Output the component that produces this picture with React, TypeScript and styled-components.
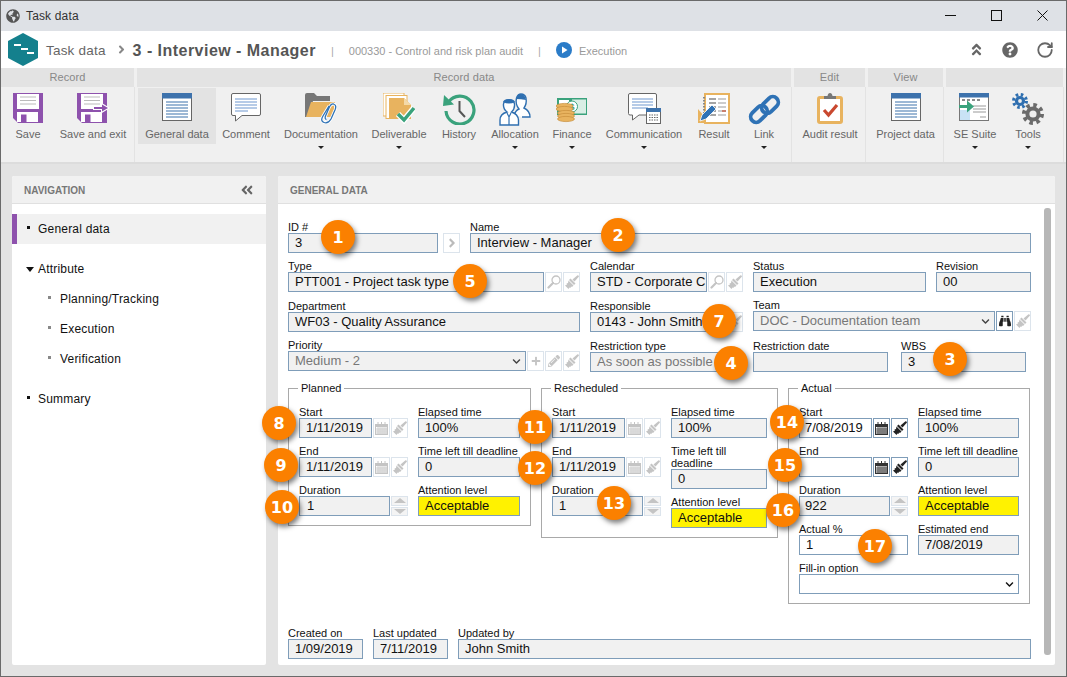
import React from "react";
import styled, { createGlobalStyle } from "styled-components";
import { FaBinoculars, FaPlus, FaPencilAlt, FaQuestionCircle, FaGlobeAmericas, FaAngleDoubleUp, FaAngleDoubleLeft, FaAngleRight, FaChevronDown } from "react-icons/fa";
import { RotateCw } from "lucide-react";

const Global = createGlobalStyle`
  html, body { margin: 0; padding: 0; background: #e3e3e3; overflow: hidden; }
  body { font-family: "Liberation Sans", Arial, sans-serif; }
  * { box-sizing: border-box; }
`;

const Win = styled.div`
  position: relative; width: 1067px; height: 677px; border: 1px solid #6a6a6a;
  display: flex; flex-direction: column; background: #e3e3e3; overflow: hidden;
`;
const TitleBar = styled.div`
  height: 30px; flex: none; background: #dee1e6; display: flex; align-items: center; padding: 0 18px 1px 5px; color: #333; font-size: 12px;
`;
const TitleGlobe = styled.span`display: flex; margin-right: 6px; color: #555;`;
const TitleText = styled.span`flex: 1; letter-spacing: .15px;`;
const WinBtns = styled.div`display: flex; gap: 35px; align-items: center; color: #111;`;

const Header = styled.div`height: 37px; flex: none; background: #fff; display: flex; align-items: center; padding: 0 12px 0 7px;`;
const Crumb = styled.span`font-size: 13.5px; color: #666; margin: 2px 0 0 8px; letter-spacing: .2px;`;
const CrumbArrow = styled.span`display: flex; color: #888; margin: 0 5px 0 9px;`;
const Heading = styled.span`font-size: 16px; font-weight: bold; color: #555; letter-spacing: .47px; margin-top: 2px;`;
const Pipe = styled.span`color: #aaa; font-size: 11px; margin: 2px 15px 0 15px;`;
const Muted = styled.span`color: #9a9a9a; font-size: 11px; margin-top: 2px;`;
const HeaderRight = styled.div`margin-left: auto; display: flex; align-items: center; gap: 18px; color: #666;`;
const PlayDot = styled.svg`margin-right: 7px; flex: none;`;

const Ribbon = styled.div`height: 96px; flex: none; background: #f0f0f0; display: flex; border-bottom: 2px solid #dcdcdc;`;
const Section = styled.div<{ $w: number }>`width: ${p => p.$w}px; flex: none; display: flex; flex-direction: column;`;
const SectionHead = styled.div`
  height: 19px; flex: none; background: #e3e3e3; margin-right: 3px; text-align: center; color: #888; font-size: 11px; line-height: 18px; letter-spacing: .1px;
`;
const SectionBody = styled.div<{ $pad?: number }>`
  flex: 1; display: flex; border-right: 1px solid #e3e3e3; margin-right: 2px; padding: 1px 0 0 ${p => p.$pad ?? 0}px;
`;
const ItemWrap = styled.div<{ $w: number }>`width: ${p => p.$w}px; flex: none; display: flex; flex-direction: column; align-items: center;`;
const Item = styled.div<{ $active?: boolean }>`
  width: 100%; height: 56px; flex: none; display: flex; flex-direction: column; align-items: center; padding-top: 5px;
  background: ${p => (p.$active ? "#e3e3e3" : "transparent")};
`;
const IconBox = styled.div`height: 32px; flex: none; display: flex; align-items: flex-start; justify-content: center;`;
const ItemLabel = styled.div`margin-top: 3px; font-size: 11px; line-height: 13px; color: #666; white-space: nowrap;`;
const Caret = styled.div`
  margin-top: 2px; width: 0; height: 0; border-left: 3px solid transparent; border-right: 3px solid transparent; border-top: 3px solid #222;
`;

const Content = styled.div`flex: 1; display: flex; gap: 12px; padding: 12px 11px 11px 11px; min-height: 0;`;
const Panel = styled.div<{ $w?: number }>`
  background: #fff; display: flex; flex-direction: column; border-radius: 2px;
  ${p => (p.$w ? `width:${p.$w}px; flex:none;` : "flex:1; min-width:0;")}
`;
const PanelHead = styled.div`
  height: 28px; flex: none; background: #f1f1f1; border-bottom: 1px solid #e0e0e0; display: flex; align-items: center; justify-content: space-between;
  padding: 1px 12px 0; font-size: 10px; font-weight: bold; color: #777; border-radius: 2px 2px 0 0;
`;
const NavList = styled.div`padding-top: 10px; display: flex; flex-direction: column;`;
const NavRow = styled.div<{ $active?: boolean; $sub?: boolean; $gap?: boolean }>`
  height: 30px; flex: none; display: flex; align-items: center; font-size: 12px; color: #111; letter-spacing: .2px;
  padding-left: ${p => (p.$sub ? 36 : 15)}px;
  margin-top: ${p => (p.$gap ? 10 : 0)}px;
  background: ${p => (p.$active ? "#f1f1f1" : "transparent")};
  box-shadow: ${p => (p.$active ? "inset 5px 0 0 #8e52ad" : "none")};
`;
const Bullet = styled.span<{ $sub?: boolean }>`
  width: 3px; height: 3px; flex: none; background: ${p => (p.$sub ? "#888" : "#111")}; margin-right: ${p => (p.$sub ? 9 : 8)}px; margin-top: -3px;
`;
const Tri = styled.span`
  width: 0; height: 0; flex: none; border-left: 4px solid transparent; border-right: 4px solid transparent; border-top: 5px solid #111;
  margin: 0 4px 0 -1px;
`;

const Form = styled.div`flex: 1; display: flex; flex-direction: column; padding: 17px 24px 6px 10px; position: relative; min-height: 0;`;
const Row = styled.div<{ $mt?: number; $gap?: number }>`display: flex; align-items: flex-start; margin-top: ${p => p.$mt ?? 0}px; gap: ${p => p.$gap ?? 10}px;`;
const Field = styled.div<{ $w?: number; $shift?: number; $ml?: number; $grow?: boolean }>`
  display: flex; flex-direction: column; flex: ${p => (p.$grow ? "1" : "none")}; min-width: 0;
  ${p => (p.$w ? `width:${p.$w}px;` : "")} margin-top: ${p => p.$shift ?? 0}px; margin-left: ${p => p.$ml ?? 0}px;
`;
const Label = styled.label`font-size: 11px; line-height: 12px; color: #111; min-height: 12px; display: block;`;
const Value = styled.div<{ $on?: boolean; $dim?: boolean; $warn?: boolean; $pl?: number }>`
  height: 20px; flex: none; min-width: 0; border: 1px solid #7f9db9; font-size: 13px; line-height: 18px; white-space: nowrap; overflow: hidden;
  padding-left: ${p => p.$pl ?? 6}px; color: ${p => (p.$dim ? "#777" : "#111")};
  background: ${p => (p.$warn ? "#fff200" : p.$on ? "#fff" : "#f1f1f1")};
  display: flex; align-items: center; justify-content: space-between;
`;
const Line = styled.div`display: flex; gap: 1px; ${Value} { flex: 1; }`;
const Chev = styled.span<{ $dim?: boolean }>`display: flex; margin-right: 4px; color: ${p => (p.$dim ? "#444" : "#111")};`;
const SmallBtn = styled.div<{ $on?: boolean }>`
  width: 17px; height: 20px; flex: none; display: flex; align-items: center; justify-content: center; background: #fff;
  border: 1px solid ${p => (p.$on ? "#7f9db9" : "#dce4ec")}; color: ${p => (p.$on ? "#222" : "#c4c4c4")};
`;
const ArrowBtn = styled(SmallBtn)`margin: 12px 0 0 -5px; color: #bbb;`;
const Spin = styled.div`width: 17px; height: 20px; flex: none; display: flex; flex-direction: column; gap: 1px;`;
const SpinPart = styled.div<{ $up?: boolean }>`
  flex: 1; border: 1px solid #dce4ec; background: #f4f4f4; display: flex; align-items: center; justify-content: center;
  &::after { content: ""; width: 0; height: 0; border-left: 6px solid transparent; border-right: 6px solid transparent;
    ${p => (p.$up ? "border-bottom: 5px solid #c4c4c4;" : "border-top: 5px solid #c4c4c4;")} }
`;

const Group = styled.div<{ $w: number; $h: number }>`
  position: relative; flex: none; width: ${p => p.$w}px; height: ${p => p.$h}px; border: 1px solid #a9a9a9; padding: 17px 10px 0 10px;
  display: flex; flex-direction: column; gap: 7px;
`;
const Legend = styled.span`
  position: absolute; top: -7px; left: 9px; background: #fff; padding: 0 3px; font-size: 11px; line-height: 13px; color: #111;
`;
const Columns = styled.div`display: flex; gap: 10px; align-items: flex-start;`;
const Col = styled.div<{ $w: number }>`width: ${p => p.$w}px; flex: none; display: flex; flex-direction: column; gap: 7px;`;

const Footer = styled.div`margin-top: auto; display: flex; gap: 10px;`;

const Scroll = styled.div`
  position: absolute; right: 4px; top: 4px; bottom: 10px; width: 7px; background: #b7b7b7; border-radius: 3px;
`;

const BadgeDot = styled.div<{ $x: number; $y: number }>`
  position: absolute; left: ${p => p.$x - 17}px; top: ${p => p.$y - 17}px; width: 34px; height: 34px; border-radius: 50%;
  background: #fb8000; color: #fff; font-family: "DejaVu Sans", Verdana, sans-serif; font-weight: bold; font-size: 16px;
  display: flex; align-items: center; justify-content: center; box-shadow: 2px 3px 5px rgba(0,0,0,.5);
`;

/* ---------- drawn icons ---------- */
const BLUE = "#3d72ac";
const TAN = "#e8b35f";
const GREEN = "#3aa27c";
const PURPLE = "#8e52ad";

const Disk = () => (
  <>
    <path d="M0 0H30V30H5L0 25Z" fill={PURPLE} />
    <rect x="4" y="1" width="22" height="15" fill="#fff" />
    <path d="M7 4H23M7 7.5H23M7 11H23" stroke="#bbb" strokeWidth="1" />
    <rect x="4" y="19" width="21" height="10" fill="#fff" />
    <rect x="8" y="21.5" width="5.5" height="7.5" fill={PURPLE} />
  </>
);
const SaveIcon = () => <svg width="30" height="30" viewBox="0 0 30 30"><Disk /></svg>;
const SaveExitIcon = () => (
  <svg width="33" height="30" viewBox="0 0 33 30">
    <Disk />
    <path d="M16 13H24V9.5L33 15L24 20.5V17H16Z" fill="#fff" />
    <path d="M17 14H25V11.5L31 15L25 18.5V16H17Z" fill={PURPLE} />
  </svg>
);
const ListIcon = () => (
  <svg width="30" height="28" viewBox="0 0 30 28">
    <rect x=".5" y=".5" width="29" height="27" fill="#fff" stroke="#666" />
    <rect x="0" y="0" width="30" height="5.5" fill={BLUE} />
    <path d="M4 9H26M4 12H26M4 15H26M4 18H26M4 21H26M4 24H26" stroke={BLUE} strokeWidth="1.2" />
  </svg>
);
const CommentIcon = () => (
  <svg width="30" height="29" viewBox="0 0 30 29">
    <path d="M2 .5H28Q29.5 .5 29.5 2V21Q29.5 22.5 28 22.5H11L4.5 28V22.5H2Q.5 22.5 .5 21V2Q.5 .5 2 .5Z" fill="#fff" stroke="#666" />
    <path d="M4 6H26M4 9H26M4 12H26M4 15H26M4 18H17" stroke="#6f97cf" strokeWidth="1.1" />
  </svg>
);
const FolderIcon = () => (
  <svg width="32" height="31" viewBox="0 0 32 31">
    <path d="M0 2Q0 0 2 0H9L12 3H25V8H8L3 24H0Z" fill="#777" />
    <path d="M6 9H30L28 24H1Z" fill={TAN} />
    <path d="M24 13L18 23Q15 28 19 29.5Q23 31 26 26L30 17Q32 12 28.5 11Q26 10.5 24 15L20.5 23Q19.5 26 21.5 26.5" fill="none" stroke="#fff" strokeWidth="3" />
    <path d="M24 13L18 23Q15 28 19 29.5Q23 31 26 26L30 17Q32 12 28.5 11Q26 10.5 24 15L20.5 23Q19.5 26 21.5 26.5" fill="none" stroke="#2f72b5" strokeWidth="1.3" />
  </svg>
);
const DeliverableIcon = () => (
  <svg width="32" height="31" viewBox="0 0 32 31">
    <rect x="0" y="0" width="21" height="23" fill="#fff" stroke={TAN} strokeWidth="1" />
    <rect x="3" y="2.5" width="21" height="23" fill="#fff" stroke={TAN} strokeWidth="1" />
    <path d="M6 5H21L28 12V26H6Z" fill={TAN} />
    <path d="M21 5V12H28Z" fill="#f4d9a8" />
    <path d="M15 21L21 27L31 15" fill="none" stroke="#fff" strokeWidth="6" />
    <path d="M15 21L21 27L31 15" fill="none" stroke={GREEN} strokeWidth="3.5" />
  </svg>
);
const HistoryIcon = () => (
  <svg width="33" height="32" viewBox="0 0 33 32">
    <path d="M5.5 9A14 14 0 1 1 3 18" fill="none" stroke={GREEN} strokeWidth="3.2" />
    <path d="M1 2L11 11.5L0 13Z" fill={GREEN} />
    <path d="M16.5 8V18L22 24" fill="none" stroke="#555" strokeWidth="2" />
  </svg>
);
const AllocIcon = () => (
  <svg width="33" height="33" viewBox="0 0 33 33">
    <g fill="#fff" stroke="#2f6fb0" strokeWidth="1.4">
      <path d="M15 22Q17 17 20 16Q16 11 17.5 5Q19 1 22 1Q26 1 27 5Q28 11 25 15Q31 18 31 24H23" />
      <path d="M1 32V27Q1 21 8 19Q4 16 4.5 11Q5 7 10 7Q15 7 15.5 11Q16 16 12.5 19Q19 21 19.5 27V32Z" />
    </g>
    <path d="M4 9Q10 12 16 9Q15 6 10 6Q5 6 4 9ZM17 6Q22 6 27 7Q26 1 22 1Q18 1 17 6Z" fill="#2f6fb0" />
    <path d="M8 20L10 24L12 20M10 24V32" fill="none" stroke="#2f6fb0" strokeWidth="1.2" />
  </svg>
);
const FinanceIcon = () => (
  <svg width="32" height="30" viewBox="0 0 32 30">
    <rect x="1" y="5" width="30" height="17" fill={GREEN} />
    <rect x="16" y="6.5" width="14" height="14" fill="#d9eee5" />
    <rect x="3" y="7" width="10" height="4" fill="#fff" />
    <circle cx="16" cy="13.5" r="5.5" fill="#fff" stroke={GREEN} />
    <text x="16" y="17" fontSize="9" fontFamily="Liberation Sans" fontWeight="bold" fill={GREEN} textAnchor="middle">$</text>
    {[13, 16, 20, 23, 26].map((y, i) => (
      <ellipse key={i} cx={i < 2 ? 8.5 : 10} cy={y} rx="8.5" ry="2.6" fill={TAN} stroke="#c98f3c" strokeWidth=".7" />
    ))}
  </svg>
);
const CommIcon = () => (
  <svg width="33" height="31" viewBox="0 0 33 31">
    <path d="M2 .5H27Q28.5 .5 28.5 2V22H11L4.5 27V22H2Q.5 22 .5 20.5V2Q.5 .5 2 .5Z" fill="#fff" stroke="#666" />
    <path d="M4 6H25M4 9H25M4 12H25M4 15H20" stroke="#6f97cf" strokeWidth="1.1" />
    <rect x="18.5" y="15.5" width="14" height="15" fill="#fff" stroke="#666" />
    <rect x="18" y="15" width="15" height="4" fill={BLUE} />
    <path d="M21 22H30M21 24.5H30M21 27H30" stroke="#666" strokeWidth="1.2" strokeDasharray="1.5 1" />
  </svg>
);
const ResultIcon = () => (
  <svg width="32" height="32" viewBox="0 0 32 32">
    <path d="M0 16L12 30H0Z" fill={TAN} />
    <rect x="6" y="0" width="26" height="31" fill={TAN} />
    <rect x="8" y="2" width="22" height="27" fill="#fff" />
    <path d="M6 4V26" stroke="#888" strokeWidth="2" strokeDasharray="1.5 1.5" />
    <path d="M11 6H18M11 10H18M11 14H18M11 18H18M11 22H18" stroke="#888" strokeWidth="1.6" />
    <path d="M20 6H28M20 10H28M20 14H28M20 18H28M20 22H28" stroke="#999" strokeWidth="1.2" />
    <path d="M24 18H28" stroke="#c9553c" strokeWidth="1.3" />
    <path d="M2 28L4 22L14 12L18 16L8 26Z" fill="#2f72b5" stroke="#fff" strokeWidth=".8" />
  </svg>
);
const LinkIcon = () => (
  <svg width="33" height="33" viewBox="0 0 33 33">
    <g fill="none" stroke="#2f72b5" strokeWidth="3.8">
      <rect x="1.5" y="15.5" width="19" height="11" rx="5.5" transform="rotate(-45 11 21)" />
      <rect x="12.5" y="6.5" width="19" height="11" rx="5.5" transform="rotate(-45 22 12)" />
    </g>
  </svg>
);
const AuditIcon = () => (
  <svg width="26" height="31" viewBox="0 0 26 31">
    <rect x="1.5" y="4.5" width="23" height="25" rx="1.5" fill="#fff" stroke={TAN} strokeWidth="3" />
    <path d="M7 6V3H10.5Q11 0 13 0Q15 0 15.5 3H19V6Z" fill="#777" />
    <path d="M7 17L11.5 22L20 12" fill="none" stroke="#c9482f" strokeWidth="3.2" />
  </svg>
);
const SuiteIcon = () => (
  <svg width="32" height="28" viewBox="0 0 32 28">
    <rect x=".5" y=".5" width="29" height="27" fill="#fff" stroke="#777" />
    <rect x="0" y="0" width="30" height="4.5" fill={BLUE} />
    <path d="M3 7H6M8 7H11M13 7H16M18 7H21" stroke="#666" strokeWidth="1.4" />
    <rect x="1" y="17" width="10" height="10" fill="#c9e2f5" />
    <path d="M14 13H27M14 16H27M14 19H27M21 24H27" stroke="#999" strokeWidth="1.2" />
    <path d="M-1 12H8V7.5L15 13.5L8 19.5V15H-1Z" fill={GREEN} />
  </svg>
);
const Gear = ({ cx, cy, r, w, color, t }: { cx: number; cy: number; r: number; w: number; color: string; t: number }) => {
  const tr = r + w / 2 + 1;
  const c = 2 * Math.PI * tr;
  return (
    <g fill="none" stroke={color}>
      <circle cx={cx} cy={cy} r={tr} strokeWidth={w} strokeDasharray={`${c / t / 2} ${c / t / 2}`} />
      <circle cx={cx} cy={cy} r={r - w * 0.1} strokeWidth={w} />
    </g>
  );
};
const ToolsIcon = () => (
  <svg width="33" height="33" viewBox="0 0 33 33">
    <Gear cx={8} cy={8} r={3.8} w={3.2} color="#2f6fb0" t={8} />
    <Gear cx={21} cy={21} r={6} w={4} color="#6b6b6b" t={8} />
  </svg>
);
const Logo = () => (
  <svg width="30" height="33" viewBox="0 0 30 33">
    <path d="M15 0L30 8V25L15 33L0 25V8Z" fill="#14808d" />
    <path d="M6 11H13V13H6ZM13 15H20V17H13ZM19 19H26V21H19Z" fill="#fff" />
  </svg>
);
const CalIcon = ({ on }: { on?: boolean }) => {
  const c = on ? "#333" : "#c4c4c4";
  return (
    <svg width="13" height="13" viewBox="0 0 13 13">
      <rect x=".5" y="2.5" width="12" height="10" fill="none" stroke={c} />
      <rect x="0" y="2" width="13" height="3" fill={c} />
      <path d="M3 0V3M6.5 0V3M10 0V3" stroke={c} />
      <path d="M1 7H12M1 9H12M1 11H12M3 5V12M5 5V12M7 5V12M9 5V12M11 5V12" stroke={c} strokeWidth=".8" />
    </svg>
  );
};
const BrushIcon = () => (
  <svg width="14" height="14" viewBox="0 0 14 14" fill="currentColor">
    <path d="M13.5 .5L14 1.500L9.500 6.500L7.500 4.500L12.500 .2Z" />
    <path d="M5.500 3.500L10.500 8.500L9 10L4 5Z" />
    <path d="M3.500 5.500L8.500 10.500L7 12L6 11.500L5.500 13L4.500 12.500L3.500 14L0 10.500L2 9.500L1.500 8.500L3 8Z" />
  </svg>
);
const LensIcon = () => (
  <svg width="14" height="14" viewBox="0 0 14 14" fill="none" stroke="currentColor">
    <circle cx="9" cy="5" r="4" strokeWidth="1.3" />
    <path d="M6 8L1.500 12.500" strokeWidth="2.2" strokeLinecap="round" />
  </svg>
);
const WinMin = () => (
  <svg width="11" height="11" viewBox="0 0 11 11"><path d="M0 5.5H11" stroke="#111" /></svg>
);
const WinMax = () => (
  <svg width="11" height="11" viewBox="0 0 11 11"><rect x=".5" y=".5" width="10" height="10" fill="none" stroke="#111" /></svg>
);
const WinClose = () => (
  <svg width="11" height="11" viewBox="0 0 11 11"><path d="M.5 .5L10.5 10.5M10.5 .5L.5 10.5" stroke="#111" /></svg>
);

/* ---------- composites ---------- */
type Tool = { label: string; w: number; icon: React.ReactNode; caret?: boolean; active?: boolean };
const Tools = ({ items }: { items: Tool[] }) => (
  <>
    {items.map(t => (
      <ItemWrap key={t.label} $w={t.w}>
        <Item $active={t.active}>
          <IconBox>{t.icon}</IconBox>
          <ItemLabel>{t.label}</ItemLabel>
        </Item>
        {t.caret && <Caret />}
      </ItemWrap>
    ))}
  </>
);

const Broom = ({ on }: { on?: boolean }) => (
  <SmallBtn $on={on}><BrushIcon /></SmallBtn>
);
const Cal = ({ on }: { on?: boolean }) => (
  <SmallBtn $on={on}><CalIcon on={on} /></SmallBtn>
);
const Lens = () => (
  <SmallBtn><LensIcon /></SmallBtn>
);

const DateField = ({ label, value, on }: { label: string; value?: string; on?: boolean }) => (
  <Field>
    <Label>{label}</Label>
    <Line>
      <Value $on={on} $pl={on ? 5 : 6}>{value}</Value>
      <Cal on={on} />
      <Broom on={on} />
    </Line>
  </Field>
);
const SpinField = ({ label, value, pl }: { label: string; value: string; pl?: number }) => (
  <Field>
    <Label>{label}</Label>
    <Line>
      <Value $pl={pl}>{value}</Value>
      <Spin><SpinPart $up /><SpinPart /></Spin>
    </Line>
  </Field>
);
const TextField = ({ label, value, warn, on, pl, w }: { label: React.ReactNode; value?: string; warn?: boolean; on?: boolean; pl?: number; w?: number }) => (
  <Field $w={w}>
    <Label>{label}</Label>
    <Value $warn={warn} $on={on} $pl={pl}>{value}</Value>
  </Field>
);

const BADGES: [number, number, number][] = [
  [1, 338, 237], [2, 618, 235], [3, 950, 359], [4, 731, 363], [5, 470, 281], [7, 719, 321],
  [8, 279, 423], [9, 281, 465], [10, 282, 507], [11, 535, 427], [12, 535, 468], [13, 614, 503],
  [14, 787, 422], [15, 785, 465], [16, 783, 510], [17, 875, 546],
];

export default function App() {
  return (
    <>
      <Global />
      <Win>
        <TitleBar>
          <TitleGlobe><FaGlobeAmericas size={14} /></TitleGlobe>
          <TitleText>Task data</TitleText>
          <WinBtns>
            <WinMin />
            <WinMax />
            <WinClose />
          </WinBtns>
        </TitleBar>
        <Header>
          <Logo />
          <Crumb>Task data</Crumb>
          <CrumbArrow><FaAngleRight size={13} /></CrumbArrow>
          <Heading>3 - Interview - Manager</Heading>
          <Pipe>|</Pipe>
          <Muted>000330 - Control and risk plan audit</Muted>
          <Pipe>|</Pipe>
          <PlayDot width="16" height="16" viewBox="0 0 16 16">
            <circle cx="8" cy="8" r="8" fill="#2b7cc8" />
            <path d="M6 4.5L11.5 8L6 11.5Z" fill="#fff" />
          </PlayDot>
          <Muted>Execution</Muted>
          <HeaderRight>
            <FaAngleDoubleUp size={15} />
            <FaQuestionCircle size={16} />
            <RotateCw size={18} strokeWidth={2.4} />
          </HeaderRight>
        </Header>
        <Ribbon>
          <Section $w={136}>
            <SectionHead>Record</SectionHead>
            <SectionBody>
              <Tools items={[
                { label: "Save", w: 54, icon: <SaveIcon /> },
                { label: "Save and exit", w: 76, icon: <SaveExitIcon /> },
              ]} />
            </SectionBody>
          </Section>
          <Section $w={657}>
            <SectionHead>Record data</SectionHead>
            <SectionBody $pad={1}>
              <Tools items={[
                { label: "General data", w: 78, icon: <ListIcon />, active: true },
                { label: "Comment", w: 60, icon: <CommentIcon /> },
                { label: "Documentation", w: 90, icon: <FolderIcon />, caret: true },
                { label: "Deliverable", w: 66, icon: <DeliverableIcon />, caret: true },
                { label: "History", w: 54, icon: <HistoryIcon /> },
                { label: "Allocation", w: 58, icon: <AllocIcon />, caret: true },
                { label: "Finance", w: 56, icon: <FinanceIcon />, caret: true },
                { label: "Communication", w: 88, icon: <CommIcon />, caret: true },
                { label: "Result", w: 52, icon: <ResultIcon /> },
                { label: "Link", w: 48, icon: <LinkIcon />, caret: true },
              ]} />
            </SectionBody>
          </Section>
          <Section $w={74}>
            <SectionHead>Edit</SectionHead>
            <SectionBody>
              <Tools items={[{ label: "Audit result", w: 72, icon: <AuditIcon /> }]} />
            </SectionBody>
          </Section>
          <Section $w={78}>
            <SectionHead>View</SectionHead>
            <SectionBody>
              <Tools items={[{ label: "Project data", w: 75, icon: <ListIcon /> }]} />
            </SectionBody>
          </Section>
          <Section $w={120}>
            <SectionHead />
            <SectionBody>
              <Tools items={[
                { label: "SE Suite", w: 58, icon: <SuiteIcon />, caret: true },
                { label: "Tools", w: 48, icon: <ToolsIcon />, caret: true },
              ]} />
            </SectionBody>
          </Section>
        </Ribbon>
        <Content>
          <Panel $w={254}>
            <PanelHead>NAVIGATION<FaAngleDoubleLeft size={14} color="#666" /></PanelHead>
            <NavList>
              <NavRow $active><Bullet />General data</NavRow>
              <NavRow $gap><Tri />Attribute</NavRow>
              <NavRow $sub><Bullet $sub />Planning/Tracking</NavRow>
              <NavRow $sub><Bullet $sub />Execution</NavRow>
              <NavRow $sub><Bullet $sub />Verification</NavRow>
              <NavRow $gap><Bullet />Summary</NavRow>
            </NavList>
          </Panel>
          <Panel>
            <PanelHead>GENERAL DATA</PanelHead>
            <Form>
              <Scroll />
              <Row>
                <TextField w={150} label="ID #" value="3" />
                <ArrowBtn><FaAngleRight size={14} /></ArrowBtn>
                <Field $grow>
                  <Label>Name</Label>
                  <Value>Interview - Manager</Value>
                </Field>
              </Row>
              <Row $mt={7}>
                <Field $w={292}>
                  <Label>Type</Label>
                  <Line>
                    <Value>PTT001 - Project task type</Value>
                    <Lens />
                    <Broom />
                  </Line>
                </Field>
                <Field $w={153}>
                  <Label>Calendar</Label>
                  <Line>
                    <Value>STD - Corporate C</Value>
                    <Lens />
                    <Broom />
                  </Line>
                </Field>
                <TextField w={173} label="Status" value="Execution" />
                <TextField w={95} label="Revision" value="00" />
              </Row>
              <Row $mt={8}>
                <TextField w={292} label="Department" value="WF03 - Quality Assurance" />
                <Field $w={153}>
                  <Label>Responsible</Label>
                  <Line>
                    <Value>0143 - John Smith</Value>
                    <Lens />
                    <Broom />
                  </Line>
                </Field>
                <Field $w={278} $shift={-1}>
                  <Label>Team</Label>
                  <Line>
                    <Value $dim>DOC - Documentation team<Chev $dim><FaChevronDown size={9} /></Chev></Value>
                    <SmallBtn $on><FaBinoculars size={12} /></SmallBtn>
                    <Broom />
                  </Line>
                </Field>
              </Row>
              <Row $mt={7}>
                <Field $w={292}>
                  <Label>Priority</Label>
                  <Line>
                    <Value $dim>Medium - 2<Chev $dim><FaChevronDown size={9} /></Chev></Value>
                    <SmallBtn><FaPlus size={10} /></SmallBtn>
                    <SmallBtn><FaPencilAlt size={12} /></SmallBtn>
                    <Broom />
                  </Line>
                </Field>
                <Field $w={153} $shift={1}>
                  <Label>Restriction type</Label>
                  <Value $dim>As soon as possible</Value>
                </Field>
                <Field $w={135} $shift={1}>
                  <Label>Restriction date</Label>
                  <Value />
                </Field>
                <Field $w={125} $shift={1} $ml={3}>
                  <Label>WBS</Label>
                  <Value>3</Value>
                </Field>
              </Row>
              <Row $mt={16}>
                <Group $w={243} $h={138}>
                  <Legend>Planned</Legend>
                  <Columns>
                    <Col $w={109}>
                      <DateField label="Start" value="1/11/2019" />
                      <DateField label="End" value="1/11/2019" />
                      <SpinField label="Duration" value="1" pl={7} />
                    </Col>
                    <Col $w={102}>
                      <TextField label="Elapsed time" value="100%" />
                      <TextField label="Time left till deadline" value="0" />
                      <TextField label="Attention level" value="Acceptable" warn />
                    </Col>
                  </Columns>
                </Group>
                <Group $w={237} $h={150}>
                  <Legend>Rescheduled</Legend>
                  <Columns>
                    <Col $w={109}>
                      <DateField label="Start" value="1/11/2019" />
                      <DateField label="End" value="1/11/2019" />
                      <SpinField label="Duration" value="1" />
                    </Col>
                    <Col $w={96}>
                      <TextField label="Elapsed time" value="100%" />
                      <TextField label={<>Time left till<br />deadline</>} value="0" />
                      <TextField label="Attention level" value="Acceptable" warn />
                    </Col>
                  </Columns>
                </Group>
                <Group $w={242} $h={216}>
                  <Legend>Actual</Legend>
                  <Columns>
                    <Col $w={109}>
                      <DateField label="Start" value="7/08/2019" on />
                      <DateField label="End" on />
                      <SpinField label="Duration" value="922" pl={5} />
                      <TextField label="Actual %" value="1" on />
                    </Col>
                    <Col $w={101}>
                      <TextField label="Elapsed time" value="100%" />
                      <TextField label="Time left till deadline" value="0" />
                      <TextField label="Attention level" value="Acceptable" warn />
                      <TextField label="Estimated end" value="7/08/2019" />
                    </Col>
                  </Columns>
                  <Field>
                    <Label>Fill-in option</Label>
                    <Value $on><span /><Chev><FaChevronDown size={9} /></Chev></Value>
                  </Field>
                </Group>
              </Row>
              <Footer>
                <TextField w={75} label="Created on" value="1/09/2019" />
                <TextField w={75} label="Last updated" value="7/11/2019" />
                <Field $grow>
                  <Label>Updated by</Label>
                  <Value>John Smith</Value>
                </Field>
              </Footer>
            </Form>
          </Panel>
        </Content>
        {BADGES.map(([n, x, y]) => (
          <BadgeDot key={n} $x={x - 1} $y={y - 1}>{n}</BadgeDot>
        ))}
      </Win>
    </>
  );
}
